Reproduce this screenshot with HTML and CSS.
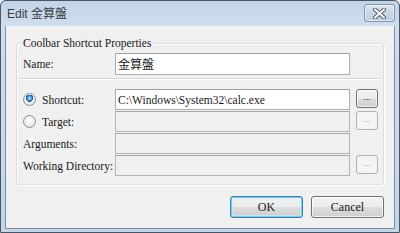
FILE: index.html
```html
<!DOCTYPE html>
<html>
<head>
<meta charset="utf-8">
<link rel="stylesheet" href="styles.css">
</head>
<body>
<div class="window">
  <div class="titlebar">
    <span class="title">Edit 金算盤</span>
    <span class="close">
      <svg width="17" height="11" viewBox="0 0 17 11">
        <path d="M4 1.5 L13 9.5 M13 1.5 L4 9.5" stroke="#5a6270" stroke-width="4.2" stroke-linecap="round" fill="none"/>
        <path d="M4 1.5 L13 9.5 M13 1.5 L4 9.5" stroke="#f4f6f9" stroke-width="2.2" stroke-linecap="round" fill="none"/>
      </svg>
    </span>
  </div>
  <div class="client">
    <fieldset class="group">
      <legend class="legend">Coolbar Shortcut Properties</legend>
      <div class="grid name-grid">
        <span class="lbl">Name:</span>
        <div class="field white"><span class="cjk">金算盤</span></div>
      </div>
      <div class="sep"></div>
      <div class="grid rows">
        <span class="lbl"><span class="radio on"></span>Shortcut:</span>
        <div class="field white">C:\Windows\System32\calc.exe</div>
        <span class="browse">...</span>

        <span class="lbl"><span class="radio"></span>Target:</span>
        <div class="field disabled"></div>
        <span class="browse off">...</span>

        <span class="lbl">Arguments:</span>
        <div class="field disabled"></div>
        <span></span>

        <span class="lbl">Working Directory:</span>
        <div class="field disabled"></div>
        <span class="browse off">...</span>
      </div>
    </fieldset>
    <div class="buttons">
      <span class="btn default">OK</span>
      <span class="btn">Cancel</span>
    </div>
  </div>
</div>
</body>
</html>
```

FILE: styles.css
```css
html, body {
  margin: 0;
  padding: 0;
  width: 400px;
  height: 233px;
  overflow: hidden;
  background: #f0f0f0;
}

.window {
  width: 400px;
  height: 233px;
  box-sizing: border-box;
  border: 1px solid #4a5666;
  border-radius: 6px 6px 0 0;
  background: linear-gradient(#c2d4e8 0px, #cfdeee 24px, #c4d5e8 100%);
  display: flex;
  flex-direction: column;
}

.titlebar {
  height: 25px;
  flex: none;
  display: flex;
  align-items: flex-start;
  justify-content: space-between;
  padding: 0 4px 0 6px;
  box-sizing: border-box;
}

.title {
  font-family: "Liberation Sans", "Noto Sans CJK TC", sans-serif;
  font-size: 12px;
  line-height: 14px;
  margin-top: 6px;
  color: #3a3a3a;
}

.close {
  margin-top: 3px;
  width: 31px;
  height: 18px;
  box-sizing: border-box;
  border: 1px solid #8394ab;
  border-radius: 3px;
  background: linear-gradient(#dde7f2, #c9d7e7 50%, #bccde1);
  box-shadow: inset 0 0 0 1px rgba(255,255,255,0.55);
  display: flex;
  align-items: center;
  justify-content: center;
}

.close svg { display: block; }

.client {
  flex: 1;
  margin: 0 4px 3px 4px;
  border: 1px solid #7d8ea3;
  border-top: none;
  background: #f0f0f0;
  display: flex;
  flex-direction: column;
  font-family: "Liberation Serif", "Noto Sans CJK TC", serif;
  font-size: 11.5px;
  font-weight: normal;
  color: #1a1a1a;
}

.group {
  margin: 10px 10px 0 10px;
  padding: 0 5px 8px 6px;
  border: 1px solid #d5dfe5;
  border-radius: 3px;
  box-shadow: inset 1px 1px 0 #fff, 1px 1px 0 #fff;
  min-inline-size: 0;
}

.legend {
  margin-left: -2px;
  padding: 0 2px;
  background: #f0f0f0;
  line-height: 14px;
  font-size: 11.5px;
}

.grid {
  display: grid;
  grid-template-columns: 86px 235px 22px;
  column-gap: 6px;
}

.name-grid {
  margin-top: 3px;
}

.rows {
  row-gap: 1px;
  grid-auto-rows: 21px;
}

.name-grid .field {
  height: 22px;
}

.lbl {
  display: flex;
  align-items: center;
  white-space: nowrap;
  line-height: 14px;
}

.field {
  box-sizing: border-box;
  height: 21px;
  display: flex;
  align-items: center;
  padding-left: 2px;
  white-space: nowrap;
  overflow: hidden;
}

.white {
  background: #fff;
  border: 1px solid #abadb3;
  border-top-color: #9a9ea6;
}

.disabled {
  background: #f0f0f0;
  border: 1px solid #b5b5b5;
  border-top-color: #a8a8a8;
}

.cjk {
  font-family: "Noto Sans CJK TC", sans-serif;
  font-size: 12px;
  line-height: 14px;
}

.sep {
  height: 1px;
  border-bottom: 1px solid #fff;
  background: #d5d5d5;
  margin: 3px -2px 9px -3px;
}

.radio {
  width: 13px;
  height: 13px;
  box-sizing: border-box;
  border-radius: 50%;
  border: 1px solid #8e8f8f;
  background: radial-gradient(circle at 50% 40%, #ffffff 0, #f0f0f0 45%, #d4d4d4 100%);
  margin-right: 6px;
  flex: none;
}

.radio.on {
  background:
    radial-gradient(circle at 50% 38%, #bfe6ff 0, #48a5e8 22%, #1a5fa8 36%, #1d4f86 40%, rgba(0,0,0,0) 42%),
    radial-gradient(circle at 50% 40%, #ffffff 0, #eeeeee 55%, #cfcfcf 100%);
}

.browse {
  width: 22px;
  height: 19px;
  box-sizing: border-box;
  border: 1px solid #707070;
  border-radius: 3px;
  background: linear-gradient(#f2f2f2 0, #ebebeb 50%, #dddddd 51%, #cfcfcf 100%);
  box-shadow: inset 0 0 0 1px rgba(255,255,255,0.7);
  font-family: "Liberation Sans", sans-serif;
  font-size: 9px;
  line-height: 15px;
  text-align: center;
  color: #222;
}

.browse.off {
  border-color: #adb2b5;
  background: #f4f4f4;
  box-shadow: none;
  color: #a0a0a0;
}

.buttons {
  display: flex;
  justify-content: flex-end;
  gap: 8px;
  margin: 11px 10px 0 0;
}

.btn {
  width: 73px;
  height: 22px;
  box-sizing: border-box;
  border: 1px solid #707070;
  border-radius: 3px;
  background: linear-gradient(#f2f2f2 0, #ebebeb 50%, #dddddd 51%, #cfcfcf 100%);
  box-shadow: inset 0 0 0 1px rgba(255,255,255,0.75);
  display: flex;
  align-items: center;
  justify-content: center;
  font-size: 12px;
  line-height: 14px;
}

.btn.default {
  border-color: #3c7fb1;
  box-shadow: inset 0 0 0 1px #6fd0f4, inset 0 0 0 2px rgba(200,240,255,0.6);
}
```
